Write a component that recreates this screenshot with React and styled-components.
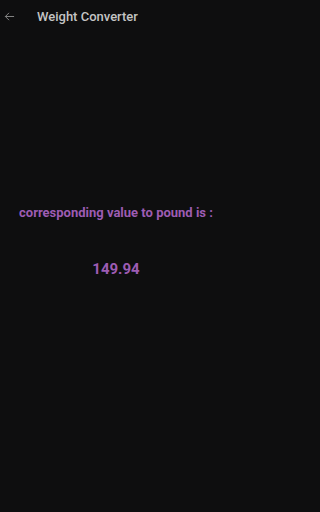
import React from "react";
import styled, { createGlobalStyle } from "styled-components";

const Global = createGlobalStyle`
  html, body {
    margin: 0;
    padding: 0;
    background: #0e0e0f;
  }
  #root {
    min-height: 100vh;
  }
`;

const Screen = styled.div`
  width: 232px;
  height: 512px;
  background: #0e0e0f;
  font-family: Roboto, "Liberation Sans", sans-serif;
  display: flex;
  flex-direction: column;
`;

const Toolbar = styled.div`
  height: 32px;
  display: flex;
  align-items: center;
  padding: 0 0 0 3px;
`;

const BackButton = styled.div`
  width: 12px;
  height: 12px;
  display: flex;
  align-items: center;
  justify-content: center;
  color: #9a9a9a;
`;

const Title = styled.div`
  margin-left: 22px;
  color: #c4c4c4;
  font-size: 13px;
  font-weight: 500;
`;

const Body = styled.div`
  flex: 1;
  display: flex;
  flex-direction: column;
  align-items: center;
  padding-top: 173px;
`;

const Label = styled.div`
  color: ${(p) => p.color};
  font-size: ${(p) => p.size}px;
  font-weight: 700;
  margin-top: ${(p) => p.gap}px;
`;

const purple = "#9d5cb3";

export default function App() {
  return (
    <>
      <Global />
      <Screen>
        <Toolbar>
          <BackButton>
            <svg width="11" height="11" viewBox="0 0 24 24" fill="none" stroke="currentColor" strokeWidth="1.8">
              <path d="M22 12H3M11 4l-8 8 8 8" />
            </svg>
          </BackButton>
          <Title>Weight Converter</Title>
        </Toolbar>
        <Body>
          <Label color={purple} size={13} gap={0}>
            corresponding value to pound is :
          </Label>
          <Label color={purple} size={15} gap={40}>
            149.94
          </Label>
        </Body>
      </Screen>
    </>
  );
}
